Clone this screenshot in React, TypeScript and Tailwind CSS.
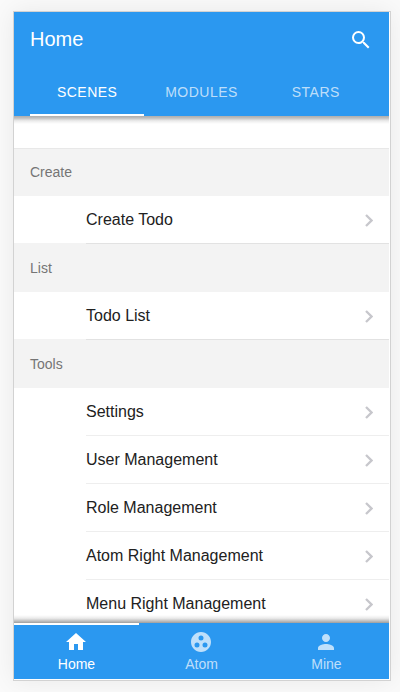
import React from "react";

const sections = [
  { title: "Create", items: ["Create Todo"] },
  { title: "List", items: ["Todo List"] },
  {
    title: "Tools",
    items: ["Settings", "User Management", "Role Management", "Atom Right Management", "Menu Right Management"],
  },
];

function Icon({ d, className }: { d: string; className: string }) {
  return (
    <svg viewBox="0 0 24 24" className={className} fill="currentColor">
      <path d={d} />
    </svg>
  );
}

const icons = {
  search:
    "M15.5 14h-.79l-.28-.27A6.47 6.47 0 0 0 16 9.5 6.5 6.5 0 1 0 9.5 16c1.61 0 3.09-.59 4.23-1.57l.27.28v.79l5 4.99L20.49 19l-4.99-5zm-6 0C7.01 14 5 11.99 5 9.5S7.01 5 9.5 5 14 7.01 14 9.5 11.99 14 9.5 14z",
  home: "M10 20v-6h4v6h5v-8h3L12 3 2 12h3v8z",
  atom: "M12 2C6.48 2 2 6.48 2 12s4.48 10 10 10 10-4.48 10-10S17.52 2 12 2zM8 17.5a2.5 2.5 0 0 1 0-5 2.5 2.5 0 0 1 0 5zM9.5 8a2.5 2.5 0 0 1 5 0 2.5 2.5 0 0 1-5 0zm6.5 9.5a2.5 2.5 0 0 1 0-5 2.5 2.5 0 0 1 0 5z",
  person:
    "M12 12c2.21 0 4-1.79 4-4s-1.79-4-4-4-4 1.79-4 4 1.79 4 4 4zm0 2c-2.67 0-8 1.34-8 4v2h16v-2c0-2.66-5.33-4-8-4z",
};

function Header() {
  return (
    <header className="relative z-10 h-[104px] shrink-0 bg-[#2b98f0] text-white">
      <div className="flex h-14 items-center justify-between px-4">
        <h1 className="-mt-0.5 text-[20px] leading-6">Home</h1>
        <Icon d={icons.search} className="size-6" />
      </div>
      <nav className="mx-4 grid h-12 grid-cols-3 text-center text-[14px] leading-[48px] tracking-[0.5px]">
        <a className="h-12 border-b-2 border-white">SCENES</a>
        <a className="text-white/70">MODULES</a>
        <a className="text-white/70">STARS</a>
      </nav>
      <div className="absolute inset-x-0 top-full h-2 bg-[linear-gradient(to_bottom,rgba(0,0,0,0.32)_0,rgba(0,0,0,0.25)_25%,rgba(0,0,0,0.08)_60%,transparent_100%)]" />
    </header>
  );
}

function TabBar() {
  const tabs = [
    { label: "Home", icon: icons.home },
    { label: "Atom", icon: icons.atom },
    { label: "Mine", icon: icons.person },
  ];
  return (
    <footer className="relative z-10 grid h-14 shrink-0 grid-cols-3 bg-[#2b98f0]">
      <div className="absolute inset-x-0 bottom-full h-2 bg-[linear-gradient(to_top,rgba(0,0,0,0.38)_0,rgba(0,0,0,0.25)_25%,rgba(0,0,0,0.08)_60%,transparent_100%)]" />
      {tabs.map((tab, i) => (
        <a
          key={tab.label}
          className={
            i === 0
              ? "flex flex-col items-center border-t-2 border-white pt-[5px] text-white"
              : "flex flex-col items-center pt-[7px] text-white/70"
          }
        >
          <Icon d={tab.icon} className="mr-px size-6" />
          <span className="text-[14px] leading-5">{tab.label}</span>
        </a>
      ))}
    </footer>
  );
}

export default function App() {
  return (
    <div className="h-[692px] w-[400px] overflow-hidden bg-[#fafafa] pt-[11px] pl-[13px] font-['Liberation_Sans',Arial,sans-serif]">
      <div className="flex h-[670px] w-[378px] flex-col border border-[#d2d2d2] bg-white pr-px pb-px shadow-[0_0_24px_rgba(0,0,0,0.07)]">
        <Header />
        <main className="min-h-0 flex-1 overflow-hidden pt-8">
          {sections.map((section, s) => (
            <section key={section.title}>
              <h2
                className={
                  s === 0
                    ? "h-12 border-t border-[#e8e8e8] bg-[#f3f3f3] pl-4 text-[14px] leading-[47px] text-[#757575]"
                    : "-mt-px h-[49px] bg-[#f3f3f3] pl-4 text-[14px] leading-[50px] text-[#757575]"
                }
              >
                {section.title}
              </h2>
              {section.items.map((item, i) => (
                <div key={item} className="relative z-[1] flex h-12 pl-[72px]">
                  <div
                    className={
                      i === section.items.length - 1
                        ? "flex flex-1 items-center justify-between border-b border-[#e2e2e2] pr-4"
                        : "flex flex-1 items-center justify-between border-b border-[#eeeeee] pr-4"
                    }
                  >
                    <span className="text-[16px] leading-6 text-[#212121]">{item}</span>
                    <svg viewBox="0 0 8 13" className="mt-0.5 h-[13px] w-2" fill="none" stroke="#c7c7cc" strokeWidth="2.3">
                      <path d="M1 1l5.5 5.5L1 12" />
                    </svg>
                  </div>
                </div>
              ))}
            </section>
          ))}
        </main>
        <TabBar />
      </div>
    </div>
  );
}
